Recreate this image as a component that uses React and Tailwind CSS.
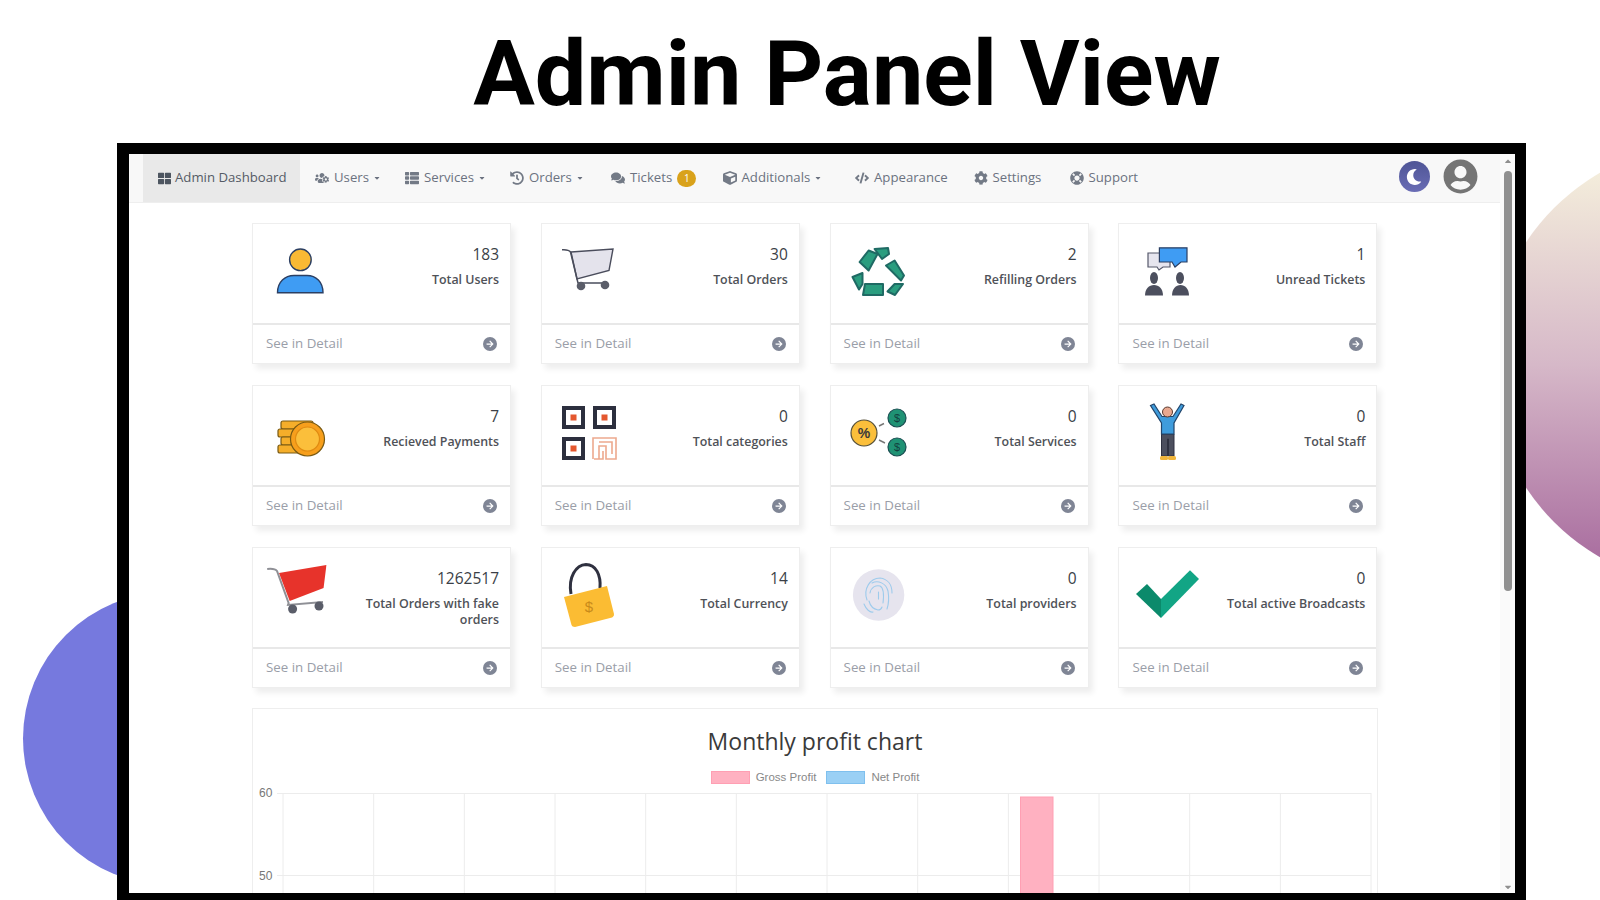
import React from "react";
import { FaThLarge, FaUsersCog, FaThList, FaHistory, FaComments, FaCube, FaCode, FaCog, FaLifeRing, FaMoon, FaUserCircle, FaCaretDown, FaCaretUp, FaArrowRight } from "react-icons/fa";

const G = "#2a9d7f";
const GS = "#1f6a64";

const UserIcon = () => (
  <g stroke="#2b3f63" strokeWidth="1.4">
    <circle cx="33.4" cy="20.8" r="10.8" fill="#f9b934" />
    <path d="M10.5 53.8C10.5 43 18 36.5 27 36.5H40C49 36.5 56 43 56 53.8Z" fill="#3f9cf3" />
  </g>
);
const CartIcon = () => (
  <g>
    <path d="M15 13L57 10L53 31.5L21 40Z" fill="#e4e3ec" stroke="#4a4d5c" strokeWidth="1.4" />
    <path d="M6 10.8C10 10.5 13 11 14.5 13L21 40L22 44H50" fill="none" stroke="#4a4d5c" strokeWidth="1.5" />
    <circle cx="25" cy="47" r="4.3" fill="#5a5d69" />
    <circle cx="49" cy="46" r="4.3" fill="#5a5d69" />
  </g>
);
const RecycleIcon = () => (
  <g fill={G} stroke={GS} strokeWidth="2" strokeLinejoin="round">
    <path d="M14.6 23L23.6 11.5L32.5 15L23.6 31.5Z" />
    <path d="M29.6 10L43 9L44 15L37 20Z" />
    <path d="M41 26.5L49.6 21.5L59 36.5L56 41.5Z" />
    <path d="M42.5 52.5L49.6 45H58L50 56Z" />
    <path d="M20 45H38V56H18Z" />
    <path d="M7.5 38L17.5 34V45L14 50.5Z" />
  </g>
);
const ChatIcon = () => (
  <g>
    <path d="M15 14H37V28H30L26 31L24 28H15Z" fill="#e6e5ee" stroke="#55586a" strokeWidth="1.2" />
    <path d="M26.4 8.8H54V23H48L42 28L39 23H26.4Z" fill="#3f9cf3" stroke="#2b3f63" strokeWidth="1.2" />
    <ellipse cx="21" cy="39" rx="4" ry="6" fill="#4c4f5e" />
    <ellipse cx="47" cy="39" rx="4" ry="6" fill="#4c4f5e" />
    <path d="M12 56.5C12 50 16 46 21 46C26 46 30 50 30 56.5Z" fill="#4c4f5e" />
    <path d="M39 56.5C39 50 43 46 47.5 46C52 46 56 50 56 56.5Z" fill="#4c4f5e" />
  </g>
);
const CoinsIcon = () => (
  <g stroke="#7a5a12" strokeWidth="1.2">
    <rect x="14" y="20" width="32" height="8" rx="2" fill="#f5ae2a" />
    <rect x="11" y="28" width="22" height="8" rx="2" fill="#f5ae2a" />
    <rect x="14" y="36" width="22" height="8" rx="2" fill="#f5ae2a" />
    <rect x="11" y="44" width="24" height="8" rx="2" fill="#f5ae2a" />
    <circle cx="40.5" cy="38" r="17" fill="#f79f1c" />
    <circle cx="40.5" cy="38" r="12" fill="#fbbf3b" stroke="#e08b12" />
  </g>
);
const QrSquare = ({ x, y }) => (
  <g>
    <rect x={x + 2} y={y + 2} width="19" height="19" fill="#fff" stroke="#2c2f3e" strokeWidth="4" />
    <rect x={x + 8.5} y={y + 8.5} width="6" height="6" fill="#e4572e" />
  </g>
);
const QrIcon = () => (
  <g>
    <QrSquare x={6} y={5} />
    <QrSquare x={37} y={5} />
    <QrSquare x={6} y={36} />
    <path d="M37 58V37H60V58H50V45H43V58M43 41H56V53M47 50V58H38" fill="none" stroke="#eda98e" strokeWidth="1.6" />
  </g>
);
const DollarCoin = ({ cy }) => (
  <g>
    <circle cx="52" cy={cy} r="9" fill="#1f9274" stroke="#1a4f52" strokeWidth="1.2" />
    <text x="52" y={cy + 4} textAnchor="middle" fontSize="11" fontFamily="Liberation Sans, sans-serif" fill="#12403f">$</text>
  </g>
);
const PercentIcon = () => (
  <g>
    <circle cx="19" cy="32" r="13" fill="#fbbf3b" stroke="#55503a" strokeWidth="1.2" />
    <text x="19" y="37" textAnchor="middle" fontSize="14" fontWeight="700" fontFamily="Liberation Sans, sans-serif" fill="#3a3a3a">%</text>
    <path d="M34 25L39 22.5M34 39L40 42" stroke="#777" strokeWidth="1.4" />
    <DollarCoin cy={17} />
    <DollarCoin cy={46} />
  </g>
);
const PersonIcon = () => (
  <g>
    <path d="M28.5 33H41V55H35.5V38H34.5V55H28.5Z" fill="#4c4f5e" stroke="#2f3140" strokeWidth="1" />
    <path d="M17.5 4.5L21 3L29 15.5H40L48 3L51 4.5L41 22V33H28.5V22Z" fill="#3f9cdc" stroke="#22456b" strokeWidth="1.2" />
    <circle cx="34.5" cy="11" r="5" fill="#e9a88f" stroke="#5a3a30" strokeWidth="1" />
    <rect x="27" y="55" width="8" height="4" rx="1.5" fill="#f0b53b" />
    <rect x="35" y="55" width="8" height="4" rx="1.5" fill="#f0b53b" />
  </g>
);
const RedCartIcon = () => (
  <g>
    <path d="M12 10L59.4 2L56.6 25L22.7 38Z" fill="#e7332b" />
    <path d="M0.2 6C5 5.5 8.5 6 10 8L21.6 40L21 42L56 39" fill="none" stroke="#8f9096" strokeWidth="2" />
    <circle cx="25.6" cy="46" r="4.5" fill="#5a5d69" />
    <circle cx="52" cy="43" r="4.5" fill="#5a5d69" />
  </g>
);
const LockIcon = () => (
  <g>
    <path d="M15 31C12 14 20 2 30 1.5C40 1.5 45 12 44 25" fill="none" stroke="#2f3140" strokeWidth="3" />
    <path d="M8 34L51 23L58 51C58 53 57 54 56 54.5L19 64C17 64 16 63 15.5 62Z" fill="#fbbc33" />
    <text x="33" y="49" textAnchor="middle" fontSize="15" fontFamily="Liberation Sans, sans-serif" fill="#c98a1a">$</text>
  </g>
);
const PrintIcon = () => (
  <g fill="none">
    <circle cx="33.6" cy="32" r="25.7" fill="#e6e4ee" />
    <g stroke="#9ecbec" strokeWidth="1.1" strokeLinecap="round">
      <path d="M22 37C18 26 25 15 35 15C43 16 47 22 47 30" />
      <path d="M27 20C33 17 41 20 43 28C44 34 44 40 42 46" />
      <path d="M25 30C26 24 31 22 35 23C39 25 39 32 38 40" />
      <path d="M33.5 29V36" />
      <path d="M19 41C21 46 25 50 28 49M24 38C25 42 28 46 33 47C36 47 37 44 37 44" />
    </g>
  </g>
);
const CheckIcon = () => (
  <g>
    <path d="M3 31L14 21L28 36V55Z" fill="#0b8a6b" />
    <path d="M28 36L57 7.3L66 16L28 55Z" fill="#12a585" />
  </g>
);

const cards = [
  ["183", "Total Users", UserIcon],
  ["30", "Total Orders", CartIcon],
  ["2", "Refilling Orders", RecycleIcon],
  ["1", "Unread Tickets", ChatIcon],
  ["7", "Recieved Payments", CoinsIcon],
  ["0", "Total categories", QrIcon],
  ["0", "Total Services", PercentIcon],
  ["0", "Total Staff", PersonIcon],
  ["1262517", "Total Orders with fake orders", RedCartIcon],
  ["14", "Total Currency", LockIcon],
  ["0", "Total providers", PrintIcon],
  ["0", "Total active Broadcasts", CheckIcon],
];

const nav = [
  ["Users", FaUsersCog, "w-[90px]", true],
  ["Services", FaThList, "w-[105px]", true],
  ["Orders", FaHistory, "w-[101px]", true],
  ["Tickets", FaComments, "w-[111.5px]", false, true],
  ["Additionals", FaCube, "w-[132.5px]", true],
  ["Appearance", FaCode, "w-[118.5px]", false],
  ["Settings", FaCog, "w-[96px]", false],
  ["Support", FaLifeRing, "w-[96px]", false],
];

function Card({ value, label, Icon }) {
  return (
    <div className="h-[141px] w-[259px] bg-white border border-[#eeeeee] shadow-[4px_5px_6px_rgba(0,0,0,0.07)] flex flex-col">
      <div className="h-[101px] flex items-start justify-between pl-[14px] pr-[11px] pt-[15px] border-b-2 border-[#e8e8e8]">
        <svg viewBox="0 0 64 66" width="64" height="66" className="shrink-0 overflow-visible">
          <Icon />
        </svg>
        <div className="flex-1 text-right pl-[26px] pt-[4px]">
          <div className="text-[15.5px] leading-[22px] text-[#3b3f47] font-medium">{value}</div>
          <div className="mt-[7px] text-[12.4px] leading-[15.5px] font-semibold text-[#4f5258]">{label}</div>
        </div>
      </div>
      <div className="flex-1 flex items-center justify-between pl-[13px] pr-[13px]">
        <span className="text-[13.3px] text-[#9a9ea8] font-medium">See in Detail</span>
        <span className="w-[14px] h-[14px] rounded-full bg-[#7f8595] flex items-center justify-center">
          <FaArrowRight className="text-white text-[8px]" />
        </span>
      </div>
    </div>
  );
}

export default function App() {
  const gridX = Array.from({ length: 13 }, (_, i) => 30 + i * 90.67);
  return (
    <div className="relative w-[1600px] h-[900px] overflow-hidden bg-white font-['Open_Sans',sans-serif]">
      <div className="absolute left-[23px] top-[592px] w-[293px] h-[293px] rounded-full bg-[#7679de]" />
      <div className="absolute left-[1489px] top-[143px] w-[444px] h-[444px] rounded-full bg-gradient-to-b from-[#f8f5de] via-[#d6b8c8] to-[#a3649a]" />
      <h1 className="relative h-[143px] flex items-center justify-center pl-[94px] pt-[4px] text-[91.7px] leading-none font-bold text-black font-['Roboto',sans-serif]">
        Admin Panel View
      </h1>
      <div className="relative ml-[117px] w-[1409px] h-[757px] border-l-[12px] border-r-[11px] border-t-[11px] border-b-[7px] border-black bg-white flex overflow-hidden">
        <div className="flex-1 min-w-0">
          <nav className="h-[49px] bg-[#f8f8f8] border-b border-[#eeeeee] pl-[14px] pr-[22.5px] flex items-center text-[13.2px] text-[#6b7280]">
            <a className="w-[157px] h-full pl-[15px] bg-[#e9e9e9] text-[#555b66] font-medium flex items-center gap-[4px] whitespace-nowrap">
              <FaThLarge className="w-[13px] h-[13px] text-[#4d5560]" />
              Admin Dashboard
            </a>
            {nav.map(([t, I, w, caret, badge]) => (
              <a key={t} className={`${w} h-full pl-[15px] flex items-center gap-[5px]`}>
                <I className="w-[14px] h-[14px] shrink-0 text-[#737a86]" />
                {t}
                {caret && <FaCaretDown className="w-[8px] h-[8px] -ml-[1px]" />}
                {badge && (
                  <span className="w-[19px] h-[17px] rounded-full bg-[#d9a21b] text-white text-[10px] flex items-center justify-center">1</span>
                )}
              </a>
            ))}
            <span className="ml-auto mb-[3px] w-[31px] h-[31px] rounded-full bg-gradient-to-b from-[#4f5596] to-[#6a6db5] flex items-center justify-center">
              <FaMoon className="text-white text-[16px]" />
            </span>
            <FaUserCircle className="ml-[13px] mb-[3px] w-[35px] h-[35px] text-[#757575]" />
          </nav>
          <main className="pl-[123px] pt-[20px]">
            <div className="grid grid-cols-[repeat(4,259px)] gap-x-[29.8px] gap-y-[21px]">
              {cards.map(([v, l, I], i) => (
                <Card key={i} value={v} label={l} Icon={I} />
              ))}
            </div>
            <section className="mt-[20px] w-[1126px] h-[260px] border border-[#eeeeee] bg-white">
              <h2 className="pt-[16px] text-center text-[23px] leading-[32px] font-medium text-[#3a3a3a]">Monthly profit chart</h2>
              <div className="mt-[14px] flex items-center justify-center gap-[6px] text-[11.5px] leading-[13px] text-[#888888] font-['Liberation_Sans',sans-serif]">
                <span className="w-[39px] h-[13px] bg-[#ffb1c1] border border-[#ff9fb3]" />
                <span className="mr-[4px]">Gross Profit</span>
                <span className="w-[39px] h-[13px] bg-[#9ad0f5] border border-[#7fc0ee]" />
                <span>Net Profit</span>
              </div>
              <svg width="1123" height="200" className="mt-[6px] block overflow-visible">
                {gridX.map((x) => (
                  <line key={x} x1={x} x2={x} y1="3" y2="200" stroke="#ececec" />
                ))}
                <line x1="24" x2="1118" y1="3.5" y2="3.5" stroke="#ececec" />
                <line x1="24" x2="1118" y1="85.5" y2="85.5" stroke="#ececec" />
                <rect x="767.5" y="7" width="32.5" height="200" fill="#ffb1c1" stroke="#ff9fb3" />
                <text x="6" y="7" fontSize="12" fill="#777777" fontFamily="Liberation Sans, sans-serif">60</text>
                <text x="6" y="90" fontSize="12" fill="#777777" fontFamily="Liberation Sans, sans-serif">50</text>
              </svg>
            </section>
          </main>
        </div>
        <div className="w-[15px] shrink-0 bg-[#fafafa] flex flex-col items-center justify-between">
          <div className="flex flex-col items-center w-full">
            <FaCaretUp className="w-[10px] h-[10px] mt-[2px] text-[#8f8f8f]" />
            <div className="mt-[5px] w-[8px] h-[420px] rounded-full bg-[#909090]" />
          </div>
          <FaCaretDown className="w-[10px] h-[10px] mb-[1px] text-[#8f8f8f]" />
        </div>
      </div>
    </div>
  );
}
